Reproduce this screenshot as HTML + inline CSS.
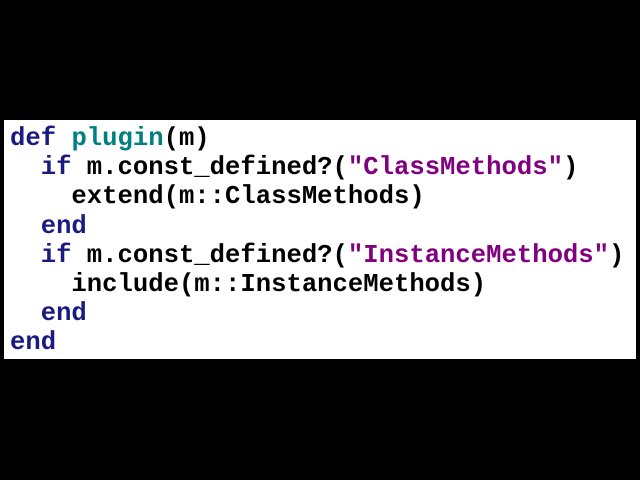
<!DOCTYPE html>
<html><head><style>
html,body{margin:0;padding:0;background:#000;width:640px;height:480px;overflow:hidden}
.box{position:absolute;left:4px;top:120px;width:632px;height:239px;background:#fff}
pre{position:absolute;left:10px;top:124px;margin:0;font-family:"Liberation Mono",monospace;font-weight:bold;font-size:25.6px;line-height:29.2px;color:#000}
.k{color:#1a1a80}.f{color:#008080}.s{color:#800080}
</style></head><body>
<div class="box"></div>
<pre><span class="k">def</span> <span class="f">plugin</span>(m)
  <span class="k">if</span> m.const_defined?(<span class="s">"ClassMethods"</span>)
    extend(m::ClassMethods)
  <span class="k">end</span>
  <span class="k">if</span> m.const_defined?(<span class="s">"InstanceMethods"</span>)
    include(m::InstanceMethods)
  <span class="k">end</span>
<span class="k">end</span></pre>
</body></html>
